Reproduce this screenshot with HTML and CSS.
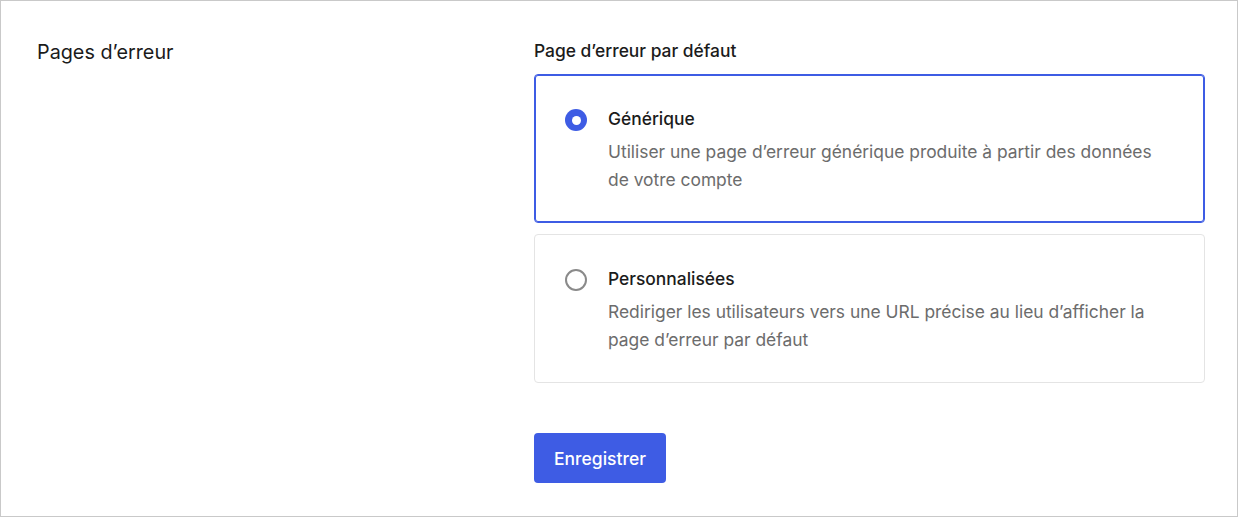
FILE: index.html
```html
<!DOCTYPE html>
<html lang="fr">
<head>
<meta charset="utf-8">
<link rel="stylesheet" href="styles.css">
</head>
<body>
<div class="frame">
  <div class="section">
    <h2 class="section-title">Pages d’erreur</h2>
    <div class="section-body">
      <div class="field-label">Page d’erreur par défaut</div>
      <div class="options">
        <label class="option selected">
          <span class="radio checked"></span>
          <span class="option-text">
            <span class="option-title">Générique</span>
            <span class="option-desc">Utiliser une page d’erreur générique produite à partir des données de votre compte</span>
          </span>
        </label>
        <label class="option">
          <span class="radio"></span>
          <span class="option-text">
            <span class="option-title">Personnalisées</span>
            <span class="option-desc">Rediriger les utilisateurs vers une URL précise au lieu d’afficher la page d’erreur par défaut</span>
          </span>
        </label>
      </div>
      <button class="btn-primary" type="button">Enregistrer</button>
    </div>
  </div>
</div>
</body>
</html>
```

FILE: styles.css
```css
* { box-sizing: border-box; }
html, body { margin: 0; padding: 0; background: #fff; }
body {
  font-family: Inter, "Noto Sans", "Liberation Sans", sans-serif;
  color: #1b1b1b;
}
.frame {
  width: 1238px;
  height: 517px;
  border: 1px solid #c9c9c9;
  padding: 38px 32px 0 36px;
}
.section {
  display: grid;
  grid-template-columns: 497px 1fr;
}
.section-title {
  margin: 0;
  font-size: 19.8px;
  font-weight: 400;
  line-height: 26px;
  color: #1b1b1b;
}
.field-label {
  font-size: 17.4px;
  font-weight: 450;
  line-height: 24px;
  margin-bottom: 11px;
}
.options {
  display: flex;
  flex-direction: column;
  gap: 11px;
}
.option {
  display: flex;
  align-items: flex-start;
  gap: 21px;
  border: 1px solid #e4e4e4;
  border-radius: 4px;
  padding: 31px 30px 28px 30px;
  height: 149px;
  cursor: pointer;
}
.option.selected {
  border-color: #3e5ce4;
  box-shadow: inset 0 0 0 1px #3e5ce4;
}
.radio {
  flex: none;
  width: 22px;
  height: 22px;
  border-radius: 50%;
  border: 2px solid #8a8a8a;
  background: #fff;
  margin-top: 3px;
  display: flex;
  align-items: center;
  justify-content: center;
}
.radio.checked {
  border: none;
  background: #3e5ce4;
}
.radio.checked::after {
  content: "";
  width: 9px;
  height: 9px;
  border-radius: 50%;
  background: #fff;
}
.option-text {
  display: flex;
  flex-direction: column;
  gap: 6px;
}
.option-title {
  font-size: 17.4px;
  font-weight: 450;
  line-height: 26px;
  color: #1b1b1b;
}
.option-desc {
  font-size: 17.4px;
  line-height: 28px;
  color: #6c6c6c;
  max-width: 560px;
}
.btn-primary {
  margin-top: 50px;
  width: 132px;
  height: 50px;
  border: none;
  border-radius: 4px;
  background: #3e5ce4;
  color: #fff;
  font-family: inherit;
  font-size: 17.5px;
  font-weight: 450;
  cursor: pointer;
}
```
